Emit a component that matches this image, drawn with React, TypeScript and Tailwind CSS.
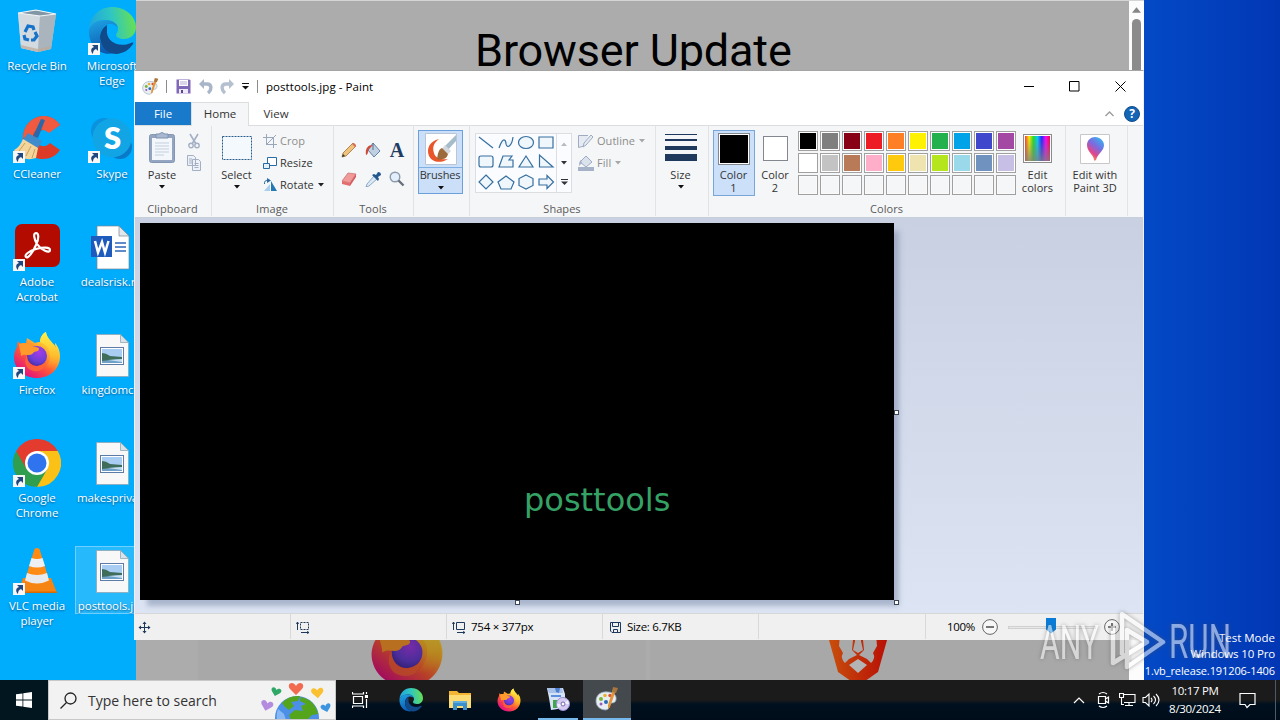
import React from 'react';
import type { ReactNode } from 'react';

type IconProps = { className?: string };

const UI = "font-['Open_Sans','Noto_Sans',sans-serif]";

const PALETTE = [
  '#000000', '#7f7f7f', '#880015', '#ed1c24', '#ff7f27', '#fff200', '#22b14c', '#00a2e8', '#3f48cc', '#a349a4',
  '#ffffff', '#c3c3c3', '#b97a57', '#ffaec9', '#ffc90e', '#efe4b0', '#b5e61d', '#99d9ea', '#7092be', '#c8bfe7',
];

/* ── App logos ─────────────────────────────────────────────────── */

function FirefoxIcon({ className }: IconProps) {
  return (
    <svg viewBox="0 0 48 48" className={className}>
      <defs>
        <linearGradient id="fxBody" x1="0.8" y1="0.1" x2="0.2" y2="0.9">
          <stop offset="0" stopColor="#fff44f" />
          <stop offset="0.3" stopColor="#ffb32c" />
          <stop offset="0.6" stopColor="#ff5a36" />
          <stop offset="1" stopColor="#e3127f" />
        </linearGradient>
        <radialGradient id="fxGlobe" cx="0.6" cy="0.3" r="0.8">
          <stop offset="0" stopColor="#a63be8" />
          <stop offset="0.6" stopColor="#6a3fd6" />
          <stop offset="1" stopColor="#3c2a9a" />
        </radialGradient>
        <linearGradient id="fxTail" x1="0.5" y1="0" x2="0.5" y2="1">
          <stop offset="0" stopColor="#fff14a" />
          <stop offset="0.6" stopColor="#ffc02e" />
          <stop offset="1" stopColor="#ff8a2a" stopOpacity="0" />
        </linearGradient>
      </defs>
      <path d="M5 10c-1 3-1 5-1 6C2 19 1 23 1 26c0 12 10 21 23 21s23-9 23-22c0-6-3-11-5-13 0 2 1 4 1 5-2-4-5-6-7-9-2-3-3-5-3-7-4 2-6 6-6 10-1 0-3 0-5 1L14 7l-1 5c-2 0-4 0-5 1-2-1-2-2-3-3z" fill="url(#fxBody)" />
      <path d="M33 1c-4 2-6 6-6 10 8 3 11 9 10 16-1 6-5 10-9 12 10 0 17-6 18-15 0-5-2-9-4-12 0 2 1 4 1 5-2-4-5-6-7-9-2-3-3-5-3-7z" fill="url(#fxTail)" />
      <circle cx="24" cy="25" r="10" fill="url(#fxGlobe)" />
      <path d="M6 13c5-2 11-1 14 3 2 0 6 0 6 2 0 2-2 2-5 3-1 2-3 3-5 3-3 0-5-1-8 1 0-4-2-7-2-12z" fill="#ff9a2b" />
      <path d="M14 24c0 8 5 12 11 11 5-1 8-4 8-4-1 7-6 10-12 9-8-1-11-9-7-16z" fill="#ff6a33" opacity="0.75" />
    </svg>
  );
}

function EdgeIcon({ className }: IconProps) {
  return (
    <svg viewBox="0 0 48 48" className={className}>
      <defs>
        <linearGradient id="edTop" x1="0" y1="0.5" x2="1" y2="0.4">
          <stop offset="0" stopColor="#1fa5e0" />
          <stop offset="0.5" stopColor="#2fc7c0" />
          <stop offset="1" stopColor="#6ae04e" />
        </linearGradient>
        <linearGradient id="edSide" x1="0.3" y1="0" x2="0.6" y2="1">
          <stop offset="0" stopColor="#1e9fe0" />
          <stop offset="1" stopColor="#0a55ad" />
        </linearGradient>
      </defs>
      <path d="M1 22C2 9 12 0 24 0c14 0 24 10 24 20 0 8-6 12-12 12-5 0-8-2-8-4 0-2 2-3 2-6 0-5-5-9-12-9C10 13 4 16 1 22z" fill="url(#edTop)" />
      <path d="M1 23c2-7 9-10 16-10 8 0 13 4 13 9 0-3-4-5-8-5-6 0-10 6-10 13 0 8 6 14 14 16-14 4-26-8-25-23z" fill="url(#edSide)" />
      <path d="M19 18c-5 3-7 8-7 13 1 10 8 16 17 16 7-1 12-4 16-10 1-1 0-2-2-1-12 5-23-1-24-10 0-3 0-6 0-8z" fill="#114a8b" />
    </svg>
  );
}

function ChromeIcon() {
  return (
    <svg viewBox="0 0 48 48" className="size-12">
      <path d="M24 24 3.200 12A24 24 0 0 1 44.800 12z" fill="#e33b2e" />
      <path d="M24 24V12h20.800A24 24 0 0 1 24 48l-2 0z" fill="#fbc116" />
      <path d="M24 24 34.400 30 24 48A24 24 0 0 1 3.200 12z" fill="#2f9e4f" />
      <path d="M3.200 12 13.600 30 24 12z" fill="#e33b2e" />
      <circle cx="24" cy="24" r="12" fill="#fff" />
      <circle cx="24" cy="24" r="9.500" fill="#2f74ee" />
    </svg>
  );
}

function RecycleBinIcon() {
  return (
    <svg viewBox="0 0 48 48" className="size-12">
      <path d="M5 6 23 3l20 4-5 35-13 3-17-4z" fill="#c4cbd1" opacity="0.9" />
      <path d="M5 6l22 3-2 36-17-4z" fill="#d3dbe1" />
      <path d="M27 9l16-2-5 35-13 3z" fill="#aab4bc" />
      <path d="M5 6 23 3l20 4-16 2z" fill="#8297a5" />
      <path d="M5 6 23 3l20 4-16 2z" fill="none" stroke="#f3f6f8" strokeWidth="1.2" />
      <path d="m8 38 17 4 13-3-1 3-12 3-17-4z" fill="#bfa894" opacity="0.7" />
      <g fill="none" stroke="#1673c9" strokeWidth="3.200">
        <path d="M12 25l3-6 5 1 1 3" />
        <path d="M22 25l2 4-3 4h-3" />
        <path d="M16 33l-4-1-1-4" />
      </g>
    </svg>
  );
}

function CCleanerIcon() {
  return (
    <svg viewBox="0 0 48 48" className="size-12">
      <path d="M47 10C42 3 36 1 30 1 18 2 10 11 10 23c0 13 9 21 20 21 7 0 13-3 17-9l-10-7c-4 5-12 4-14-3-1-8 7-13 13-8z" fill="#dc3b28" />
      <path d="M30 1C18 2 10 11 10 23l10-2c1-7 9-9 16-3L47 10C42 3 36 1 30 1z" fill="#f05a40" />
      <path d="m28 4 4 1-7 18-5-2z" fill="#2c68a8" />
      <path d="m15 18 14 8-4 7-15-8z" fill="#3f8ccc" />
      <path d="m10 24 15 9-2 10c-9 3-17 0-22-8 4-2 7-6 9-11z" fill="#f4d59c" />
      <path d="m12 28-6 8m12-5-5 10m9-7-3 9" stroke="#c89f5c" strokeWidth="1" />
    </svg>
  );
}

function SkypeIcon() {
  return (
    <svg viewBox="0 0 48 48" className="size-12">
      <circle cx="16" cy="16" r="13" fill="#0a92df" />
      <circle cx="32" cy="32" r="12" fill="#087ac8" />
      <circle cx="24" cy="23" r="19.500" fill="#12a5e6" />
      <text x="24.500" y="34" textAnchor="middle" fontFamily="Lato, Open Sans, sans-serif" fontWeight="800" fontSize="31" fill="#fff">S</text>
    </svg>
  );
}

function AcrobatIcon() {
  return (
    <svg viewBox="0 0 48 48" className="size-12">
      <rect x="2" y="1" width="45" height="43" rx="7" fill="#b30b00" />
      <path d="M13 34c-2-2 3-6 10-8 7-2 14-2 14 1 0 4-9 0-13-6-3-5-4-11-1-11s3 6 0 12c-3 7-8 14-10 12z" fill="none" stroke="#fff" strokeWidth="2.200" />
    </svg>
  );
}

function VlcIcon() {
  return (
    <svg viewBox="0 0 48 48" className="size-12">
      <path d="M10 31h28l6 15H5z" fill="#f58413" />
      <path d="M5 44.500h39V46H5z" fill="#d86a05" />
      <path d="M21.500 2q2.500-2 5 0l8 26 1 6q-11.500 6-23 0l1-6z" fill="#ff8a14" />
      <path d="m18.500 11-2.500 8q8 3 16 0l-2.500-8q-5.500 2-11 0z" fill="#eef0f2" />
      <path d="m14 26-2 7.500q12 6 24 0L34 26q-10 4-20 0z" fill="#e7e9ec" />
    </svg>
  );
}

function WordDocIcon() {
  return (
    <svg viewBox="0 0 48 48" className="size-12">
      <path d="M9 3h22l10 10v33H9z" fill="#fff" stroke="#7b8792" strokeWidth="0.7" />
      <path d="M31 3v10h10z" fill="#dfe6ec" stroke="#7b8792" strokeWidth="0.7" />
      <path d="M27 20h11M27 24h11M27 28h11" stroke="#2b66b8" strokeWidth="1.400" />
      <rect x="3" y="13" width="21" height="21" fill="#1f5bbd" />
      <path d="M7 18l3 11.500L14 19l3 10.500L20.500 18" fill="none" stroke="#fff" strokeWidth="2.500" />
    </svg>
  );
}

function PictureFileIcon() {
  return (
    <svg viewBox="0 0 48 48" className="size-12">
      <path d="M8.500 3.500h24l8 8v34h-32z" fill="#f8f8f8" stroke="#8fa7b5" strokeWidth="0.8" />
      <path d="M32.500 3.500v8h8z" fill="#d9e2e8" stroke="#8fa7b5" strokeWidth="0.8" />
      <rect x="12.500" y="16.500" width="23" height="17" fill="#fff" stroke="#5d7ca8" />
      <path d="M14 18h20v8H14z" fill="#a9cdf2" />
      <path d="M14 26h20v6H14z" fill="#6fa1c8" />
      <path d="M14 22q4 0 8 3l12 1v2l-12 1-8 1z" fill="#3f6d5c" />
      <path d="M20 29l14-1v3z" fill="#c6def0" />
    </svg>
  );
}

function PaletteIcon({ className }: IconProps) {
  return (
    <svg viewBox="0 0 24 24" className={className}>
      <path d="M1 14C1 8 6 4 13 5c6 0 9 4 8 8-1 4-4 2-6 4-1 2 0 5-4 6C6 23 1 20 1 14z" fill="#e9eef3" stroke="#8fa3b5" strokeWidth="0.8" />
      <circle cx="6" cy="12" r="2" fill="#7bb33b" />
      <circle cx="10" cy="8.500" r="1.800" fill="#e9b131" />
      <circle cx="15" cy="8.500" r="1.700" fill="#d8533a" />
      <circle cx="11" cy="15" r="2" fill="#2a6bb8" />
      <circle cx="6" cy="17" r="1.500" fill="#9a5bc0" />
      <path d="m21 3-6 17-2 2 0-4 5-16z" fill="#e0953a" />
      <path d="m18 0 5 1-2 5-4-1z" fill="#a8763c" />
    </svg>
  );
}

/* ── Desktop ───────────────────────────────────────────────────── */

function ShortcutArrow() {
  return (
    <svg viewBox="0 0 12 12" className="absolute bottom-0 left-0 size-3">
      <path d="M0 0h12v12H0z" fill="#f7f7f7" />
      <path d="M4 2h6v6L8 6C6 7 5 8 5 11 2 8 3 5 6 4z" fill="#20487f" />
    </svg>
  );
}

type DesktopItemProps = { label: ReactNode; icon: ReactNode; shortcut?: boolean; selected?: boolean };

function DesktopItem({ label, icon, shortcut, selected }: DesktopItemProps) {
  return (
    <div
      className={`flex flex-col items-center w-[74px] h-[108px] ${
        selected ? 'relative before:absolute before:inset-x-0 before:-top-px before:h-[68px] before:border before:border-[#6fd0ff] before:bg-white/15' : ''
      }`}
    >
      <div className="relative size-12">
        {icon}
        {shortcut && <ShortcutArrow />}
      </div>
      <div className="relative mt-[3px] text-[11.5px] leading-[15px] text-white text-center whitespace-nowrap tracking-[-0.050px] [text-shadow:0_1px_2px_rgba(0,40,90,0.65)]">
        {label}
      </div>
    </div>
  );
}

function DesktopIcons() {
  return (
    <div className="grid grid-flow-col grid-rows-6 gap-x-px w-max pt-[7px]">
      <DesktopItem label="Recycle Bin" icon={<RecycleBinIcon />} />
      <DesktopItem label="CCleaner" icon={<CCleanerIcon />} shortcut />
      <DesktopItem label={<>Adobe<br />Acrobat</>} icon={<AcrobatIcon />} shortcut />
      <DesktopItem label="Firefox" icon={<FirefoxIcon className="size-12" />} shortcut />
      <DesktopItem label={<>Google<br />Chrome</>} icon={<ChromeIcon />} shortcut />
      <DesktopItem label={<>VLC media<br />player</>} icon={<VlcIcon />} shortcut />
      <DesktopItem label={<>Microsoft<br />Edge</>} icon={<EdgeIcon className="size-12" />} shortcut />
      <DesktopItem label="Skype" icon={<SkypeIcon />} shortcut />
      <DesktopItem label="dealsrisk.rtf" icon={<WordDocIcon />} />
      <DesktopItem label="kingdomc..." icon={<PictureFileIcon />} />
      <DesktopItem label="makespriva..." icon={<PictureFileIcon />} />
      <DesktopItem label="posttools.jpg" icon={<PictureFileIcon />} selected />
    </div>
  );
}

/* ── Browser window behind Paint ───────────────────────────────── */

function BraveIcon() {
  return (
    <svg viewBox="0 0 60 72" className="w-[60px] h-[72px]">
      <defs>
        <linearGradient id="brave" x1="0" x2="1">
          <stop offset="0" stopColor="#c8500c" />
          <stop offset="1" stopColor="#b80e06" />
        </linearGradient>
      </defs>
      <path d="M8 4h44l8 12-1 10-9 32-20 14-20-14L1 26 0 16z" fill="url(#brave)" />
      <path d="M12 20h12l1 6-1 10 5 5-8 4-4 4q-5-5-2-10l-4-7z" fill="#a9a9a9" />
      <path d="M48 20H36l-1 6 1 10-5 5 8 4 4 4q5-5 2-10l4-7z" fill="#a9a9a9" />
      <path d="M27 20h6v7l2 9-5 3-5-3 2-9z" fill="#a9a9a9" />
      <path d="m30 45 9 6-9 8-9-8z" fill="#b4b4b4" />
    </svg>
  );
}

function BrowserWindow() {
  return (
    <div className="absolute left-[136px] top-0 w-[1008px] h-[686px] flex bg-[#acacac] border-t border-[#d5d5d5]">
      <div className="flex-1 flex flex-col justify-between overflow-hidden">
        <h1 className="pl-[339px] pt-[20px] font-[Roboto,sans-serif] text-[45px] leading-[60px] tracking-[-0.150px] text-black whitespace-nowrap">
          Browser Update
        </h1>
        <div className="h-[72px] ml-[62px] flex gap-1">
          <div className="w-[448px] bg-[#a8a8a8] pl-[172px]">
            <FirefoxIcon className="size-[74px] brightness-[0.72]" />
          </div>
          <div className="flex-1 bg-[#a8a8a8] pl-[178px]"><BraveIcon /></div>
        </div>
      </div>
      <div className="w-[15px] bg-[#fcfcfc] flex flex-col items-center pt-[6px]">
        <svg viewBox="0 0 10 6" className="w-[9px] h-[6px]"><path d="M0 6 5 0l5 6z" fill="#858585" /></svg>
        <div className="mt-[6px] w-[9px] h-[300px] rounded-full bg-[#8b8b8b]" />
      </div>
    </div>
  );
}

/* ── Paint ─────────────────────────────────────────────────────── */

function Caret({ className = 'text-[#222]' }: IconProps) {
  return <svg viewBox="0 0 6 4" className={`w-[6px] h-[4px] shrink-0 ${className}`}><path d="M0 0h6L3 3.500z" fill="currentColor" /></svg>;
}

function TitleBar() {
  return (
    <div className="h-[31px] shrink-0 flex items-center pl-[7px] text-xs text-black">
      <PaletteIcon className="size-[17px]" />
      <div className="ml-[7px] w-px h-[13px] bg-[#8c8c8c]" />
      <svg viewBox="0 0 15 15" className="ml-[9px] size-[15px]">
        <path d="M.5.500h13l1 1v13H.500z" fill="#8069b8" />
        <path d="M3 1h9v6H3z" fill="#fff" />
        <path d="M4 3h7M4 5h7" stroke="#b7a6d8" />
        <path d="M3 10h9v4.500H3z" fill="#efeaf8" />
        <path d="M5 11h2v3H5z" fill="#5a4590" />
      </svg>
      <svg viewBox="0 0 14 15" className="ml-[8px] w-[14px] h-[15px]">
        <path d="M3 5h5c5 0 5 6 1 9" fill="none" stroke="#a9b5c9" strokeWidth="3.400" />
        <path d="M0 5 5 0v10z" fill="#a9b5c9" />
      </svg>
      <svg viewBox="0 0 14 15" className="ml-[7px] w-[14px] h-[15px]">
        <path d="M11 5H6c-5 0-5 6-1 9" fill="none" stroke="#b4bfd0" strokeWidth="3.400" />
        <path d="M14 5 9 0v10z" fill="#b4bfd0" />
      </svg>
      <svg viewBox="0 0 7 7" className="ml-[8px] size-[7px]"><path d="M0 .5h7" stroke="#111" /><path d="M0 3h7L3.500 6.500z" fill="#111" /></svg>
      <div className="ml-[8px] w-px h-[13px] bg-[#8c8c8c]" />
      <span className="ml-[8px] text-[11.500px] tracking-[0.050px]">posttools.jpg - Paint</span>
      <div className="ml-auto flex items-center">
        <svg viewBox="0 0 11 11" className="size-[11px] mr-[34px]"><path d="M0 5.500h10" stroke="#000" /></svg>
        <svg viewBox="0 0 11 11" className="size-[11px] mr-[35px]"><path d="M.5.500h9.500v9.500H.500z" fill="none" stroke="#000" /></svg>
        <svg viewBox="0 0 11 11" className="size-[11px] mr-[17px]"><path d="m.5.500 10 10m0-10-10 10" stroke="#000" /></svg>
      </div>
    </div>
  );
}

function Tabs() {
  return (
    <div className="h-6 shrink-0 flex text-[11.500px] leading-6 text-[#333] border-b border-[#dcdddf]">
      <div className="w-14 bg-[#1979ca] text-white text-center">File</div>
      <div className="w-[58px] h-6 bg-[#f5f6f7] border-x border-t border-[#dcdddf] text-center leading-[22px]">Home</div>
      <div className="w-[54px] text-center">View</div>
      <div className="ml-auto flex items-center pr-[3px]">
        <svg viewBox="0 0 9 6" className="w-[9px] h-[6px] mr-[10px]"><path d="m.5 5 4-4 4 4" fill="none" stroke="#9a9a9a" strokeWidth="1.300" /></svg>
        <div className="size-4 rounded-full bg-[#1565b5] border border-[#0d4d90] text-white text-[12px] font-bold leading-[14px] text-center">?</div>
      </div>
    </div>
  );
}

function Group({ width, label = '', children }: { width: string; label?: string; children: ReactNode }) {
  return (
    <div className={`shrink-0 flex flex-col ${width} border-r border-[#e1e3e5]`}>
      <div className="h-[74px] flex">{children}</div>
      <div className="h-[16px] -ml-px text-center leading-[18px] text-[#5a5a5a]">{label}</div>
    </div>
  );
}

type BigButtonProps = { width: string; icon: ReactNode; label: ReactNode; caret?: boolean };

function BigButton({ width, icon, label, caret }: BigButtonProps) {
  return (
    <div className={`shrink-0 flex flex-col items-center pt-[6px] ${width}`}>
      <div className="h-9 w-full flex flex-col items-center">{icon}</div>
      <div className="text-center leading-[13px] text-[#333] whitespace-nowrap">{label}</div>
      {caret && <Caret className="mt-[4px] text-[#111]" />}
    </div>
  );
}

function SmallRow({ icon, label, caret, disabled }: { icon: ReactNode; label: string; caret?: boolean; disabled?: boolean }) {
  return (
    <div className={`h-[22px] flex items-center ${disabled ? 'text-[#8d8d8d]' : 'text-[#333]'}`}>
      {icon}
      <span className="ml-[3px]">{label}</span>
      {caret && <Caret className={`ml-[4px] ${disabled ? 'text-[#a8a8a8]' : 'text-[#222]'}`} />}
    </div>
  );
}

function ClipboardGroup() {
  return (
    <Group width="w-[77px]" label="Clipboard">
      <div className="w-[9px]" />
      <BigButton
        width="w-9"
        label="Paste"
        caret
        icon={
          <svg viewBox="0 0 26 32" className="w-[26px] h-8">
            <rect x="0.500" y="2.500" width="25" height="28" rx="2" fill="#93a5c1" stroke="#8397b5" />
            <path d="M3 6h20v22H3z" fill="#f3f6fa" />
            <path d="M6 11h14M6 14h14M6 17h14M6 20h14M6 23h9" stroke="#c4cfdf" />
            <path d="M7 2h3q3-3 6 0h3v4H7z" fill="#a8b8d0" stroke="#7e92b0" />
          </svg>
        }
      />
      <div className="w-[27px] pt-[4px] flex flex-col items-center">
        <svg viewBox="0 0 12 16" className="w-3 h-[22px]">
          <path d="M2 1l6 10M10 1 4 11" stroke="#a3afc4" strokeWidth="1.600" />
          <circle cx="3" cy="12.500" r="2.200" fill="none" stroke="#a3afc4" strokeWidth="1.400" />
          <circle cx="9" cy="12.500" r="2.200" fill="none" stroke="#a3afc4" strokeWidth="1.400" />
        </svg>
        <svg viewBox="0 0 16 16" className="w-4 h-[22px]" fill="#eef2f8" stroke="#a3afc4">
          <path d="M1.500.500h6l2 2v8h-8zM6.500 4.500h6l2 2v9h-8z" />
          <path d="M3 4h3M3 6h3M3 8h3M8.500 8.500h4M8.500 10.500h4M8.500 12.500h4" />
        </svg>
      </div>
    </Group>
  );
}

function ImageGroup() {
  return (
    <Group width="w-[122px]" label="Image">
      <div className="w-[3px]" />
      <BigButton
        width="w-[43px]"
        label="Select"
        caret
        icon={
          <svg viewBox="0 0 30 32" className="w-[30px] h-8">
            <rect x="0.500" y="4.500" width="29" height="23" fill="#f4f9fd" stroke="#2a5c8d" strokeDasharray="2 1" />
          </svg>
        }
      />
      <div className="pl-[5px] pt-[4px]">
        <SmallRow
          label="Crop"
          disabled
          icon={<svg viewBox="0 0 14 14" className="size-[14px]" fill="none" stroke="#9aa7bb"><path d="M3.500 0v10.500H14M0 3.500h10.500V14M3 11 13 1" /></svg>}
        />
        <SmallRow
          label="Resize"
          icon={<svg viewBox="0 0 14 14" className="size-[14px]" fill="#fff" stroke="#2a6aa3"><path d="M4.500 1.500h9v8h-9z" /><path d="M.5 7.500h6v5h-6z" fill="#e4f0fa" /></svg>}
        />
        <SmallRow
          label="Rotate"
          caret
          icon={
            <svg viewBox="0 0 14 14" className="size-[14px]">
              <path d="M8 3v10h6z" fill="#2479b5" />
              <path d="M7 6v7H1z" fill="#a9cdec" />
              <path d="M1.500 6Q1 2 5 2.500" fill="none" stroke="#2a6aa3" />
              <path d="m4 0 4 2.500L4 5z" fill="#2a6aa3" />
            </svg>
          }
        />
      </div>
    </Group>
  );
}

function ToolsGroup() {
  return (
    <Group width="w-[80px]" label="Tools">
      <div className="ml-[3px] pt-[9px] grid grid-cols-[24px_24px_24px] grid-rows-[29px_29px] place-items-center h-[67px]">
        <svg viewBox="0 0 16 16" className="size-4">
          <path d="M1 15l1-4L12 1l3 3L5 14z" fill="#f0c27c" stroke="#9b7440" strokeWidth="0.800" />
          <path d="m11 2 2-1 2 2-1 2z" fill="#d76a5c" />
          <path d="m1 15 1-3 2 2z" fill="#333" />
        </svg>
        <svg viewBox="0 0 16 16" className="size-4">
          <path d="m8 1 7 8-6 6-6-7z" fill="#bfd0e2" stroke="#6583a5" />
          <path d="M8 1v7" stroke="#52708f" />
          <path d="M8 3C3 3 0 6 1 13c2 0 2-4 3-6z" fill="#cf4d38" />
        </svg>
        <span className="font-['Liberation_Serif',serif] font-bold text-[20px] leading-5 text-[#1f3d63]">A</span>
        <svg viewBox="0 0 16 16" className="size-4">
          <path d="m7 2 8 1-6 9-8-2z" fill="#f09a9a" stroke="#c86868" strokeWidth="0.700" />
          <path d="m1 10 8 2v3l-8-2z" fill="#e26e70" />
          <path d="m9 12 6-9v3l-6 9z" fill="#d45a60" />
        </svg>
        <svg viewBox="0 0 16 16" className="size-4">
          <path d="m9 5 3 3-8 7-3 1 1-3z" fill="#d9e9f6" stroke="#7898b8" strokeWidth="0.800" />
          <path d="m7 4 2-1 2 1 2-3q3 0 3 3l-3 2 1 2-1 2z" fill="#24578f" />
        </svg>
        <svg viewBox="0 0 16 16" className="size-4">
          <circle cx="6" cy="6" r="4.800" fill="#e2eefa" stroke="#8c9bac" strokeWidth="1.400" />
          <path d="m9.500 9.500 5 5" stroke="#66707c" strokeWidth="2.400" />
        </svg>
      </div>
    </Group>
  );
}

function BrushesGroup() {
  return (
    <Group width="w-[56px]">
      <div className="ml-[4px] mt-[4px] w-[45px] h-[64px] border border-[#6aa1dc] bg-[#cbe0f8] flex flex-col items-center text-[#333]">
        <div className="h-[37px] w-full pt-[2px] border-b border-[#7fb0e4] flex justify-center">
          <svg viewBox="0 0 32 32" className="size-8">
            <path d="M.5.500h31v31H.500z" fill="#fff" stroke="#b9c6d6" />
            <path d="M14 6C5 8 1 15 4 23c3 6 11 8 19 3-7 1-13-1-14-6-2-6 0-10 5-14z" fill="#e8562a" />
            <path d="M31 2v6L22 18l-4-3z" fill="#a7bccb" />
            <path d="m20 12 6 6-3 3-6-5z" fill="#d2d8de" />
            <path d="m17 15 6 6c-1 5-6 6-11 5 1-5 1-9 5-11z" fill="#9d6a3c" />
          </svg>
        </div>
        <span className="-ml-px leading-[14px] tracking-[-0.150px]">Brushes</span>
        <Caret className="mt-[4px] text-[#111]" />
      </div>
    </Group>
  );
}

const SHAPES = [
  'M2 3l14 11', 'M2 14C7 0 9 8 9 10c1 5 6 2 7-7', 'M1.500 8.500a7.500 6 0 1 0 15 0a7.500 6 0 1 0-15 0', 'M2 3h14v11H2z',
  'M4 3h10q2 0 2 2v7q0 2-2 2H4q-2 0-2-2V5q0-2 2-2z', 'M6 3h9l-3 4h4v7H2z', 'M9 3l7 11H2z', 'M2.500 2v12H16z',
  'M9 2l7 7-7 7-7-7z', 'M9 3l8 6-3 7H4L1 9z', 'M9 2l7 3.500v7L9 16l-7-3.500v-7z', 'M2 6h8V2.500L16.500 9 10 15.500V12H2z',
];

function ShapesGroup() {
  return (
    <Group width="w-[186px]" label="Shapes">
      <div className="ml-[5px] mt-[7px] w-[97px] h-[60px] border border-[#dcdee2] bg-[#fafcff] flex">
        <div className="w-[81px] grid grid-cols-4 grid-rows-3 border-r border-[#dcdee2]">
          {SHAPES.map((d) => (
            <svg key={d} viewBox="0 0 18 18" className="size-[18px] ml-px"><path d={d} fill={d === 'M2 3l14 11' ? 'none' : '#eff7fd'} stroke="#376f9f" strokeWidth="1.200" /></svg>
          ))}
        </div>
        <div className="flex-1 flex flex-col items-center justify-between pt-[8px] pb-[7px]">
          <Caret className="rotate-180 text-[#bbb]" />
          <Caret className="text-[#333]" />
          <svg viewBox="0 0 7 6" className="w-[7px] h-[6px]"><path d="M0 .5h7" stroke="#333" /><path d="M0 2.500h7L3.500 6z" fill="#333" /></svg>
        </div>
      </div>
      <div className="pl-[6px] pt-[4px]">
        <SmallRow
          label="Outline"
          caret
          disabled
          icon={<svg viewBox="0 0 16 16" className="size-4" fill="#e6ebf3" stroke="#9eabc0"><path d="M10 2.500H.500v12L6 13" /><path d="m5 14 1-4 7-8 2 2-7 8z" /></svg>}
        />
        <SmallRow
          label="Fill"
          caret
          disabled
          icon={<svg viewBox="0 0 16 16" className="size-4"><path d="m8 1 6 6-6 5-6-5z" fill="#dbe2ed" stroke="#9eabc0" /><path d="M3 5q-2 1-2 6l3-3zM0 12h16v4H0z" fill="#a5b2c8" /></svg>}
        />
      </div>
    </Group>
  );
}

function Swatch({ className }: { className: string }) {
  return <div className={`border border-[#828790] ring-1 ring-inset ring-white ${className}`} />;
}

function ColorsGroup() {
  return (
    <Group width="w-[357px]" label="Colors">
      <div className="ml-[4px] mt-[4px] w-[42px] h-[66px] bg-[#cce1f9] border border-[#78a6d8] flex flex-col items-center pt-[2px] leading-[13px] text-[#333]">
        <div className="size-8 border border-[#828790] bg-white p-px"><div className="size-full bg-black" /></div>
        <span className="-ml-px mt-[3px] text-center">Color<br />1</span>
      </div>
      <BigButton width="w-[40px]" icon={<Swatch className="mt-[4px] size-[25px] bg-white" />} label={<>Color<br />2</>} />
      <div className="pl-[3px] pt-[5px] grid grid-cols-10 gap-[2px] w-max h-max">
        {PALETTE.map((c) => (
          <div key={c} className="size-5 border border-[#a0a0a0] bg-white p-px">
            <div className="size-full" style={{ backgroundColor: c }} />
          </div>
        ))}
        {Array.from({ length: 10 }, (_, i) => (
          <div key={i} className="size-5 border border-[#a0a0a0] bg-[#f5f6f7] ring-1 ring-inset ring-[#fafafa]" />
        ))}
      </div>
      <BigButton
        width="w-[43px]"
        label={<>Edit<br />colors</>}
        icon={
          <div className="mt-[2px] size-[29px] border border-[#8c8c8c] bg-white p-[1px]">
            <div className="size-full bg-[linear-gradient(to_top,#808080cc,#80808000),linear-gradient(to_right,#f33,#fe0,#2d2,#0cf,#22f,#f0f,#f03)]" />
          </div>
        }
      />
    </Group>
  );
}

function Ribbon() {
  return (
    <div className="h-[91px] shrink-0 bg-[#f5f6f7] flex pb-px text-[11px] tracking-[0.050px]">
      <ClipboardGroup />
      <ImageGroup />
      <ToolsGroup />
      <BrushesGroup />
      <ShapesGroup />
      <Group width="w-[53px]">
        <BigButton
          width="w-[49px]"
          label="Size"
          caret
          icon={
            <div className="w-8 pt-[2px] flex flex-col">
              <div className="h-px bg-[#1e395b]" />
              <div className="mt-[4px] h-[2px] bg-[#1e395b]" />
              <div className="mt-[5px] h-1 bg-[#1e395b]" />
              <div className="mt-[4px] h-[7px] bg-[#1e395b]" />
            </div>
          }
        />
      </Group>
      <ColorsGroup />
      <Group width="w-[62px]">
        <BigButton
          width="w-[58px]"
          label={<>Edit with<br />Paint 3D</>}
          icon={
            <svg viewBox="0 0 30 30" className="mt-[2px] size-[30px]">
              <defs>
                <linearGradient id="paint3d" x1="0.800" y1="0" x2="0.200" y2="1">
                  <stop offset="0" stopColor="#35b5f2" />
                  <stop offset="0.400" stopColor="#7a6be0" />
                  <stop offset="0.700" stopColor="#e2468b" />
                  <stop offset="1" stopColor="#ffb03a" />
                </linearGradient>
              </defs>
              <path d="M.5.500h29v29H.500z" fill="#fff" stroke="#c8c8c8" />
              <path d="M15 3c5 0 9 4 9 8 0 6-6 8-8 15-1 1-2 1-2 0 0-5-7-8-7-15 0-5 4-8 8-8z" fill="url(#paint3d)" />
            </svg>
          }
        />
      </Group>
    </div>
  );
}

function Handle({ className }: { className: string }) {
  return <div className={`absolute size-[5px] bg-white border border-[#3c4656] ${className}`} />;
}

function CanvasArea() {
  return (
    <div className="h-[396px] shrink-0 bg-linear-to-b from-[#c8d0e2] to-[#dde5f4] border-t border-[#c9cedb] pt-[5px] pl-[5px]">
      <div className="relative w-[754px] h-[377px] bg-black shadow-[6px_7px_5px_-1px_rgba(120,135,165,0.500)]">
        <span className="block pt-[256px] pl-[384px] font-['DejaVu_Sans',sans-serif] text-[32px] leading-[42px] text-[#35a265]">
          posttools
        </span>
        <Handle className="left-[754px] top-[187px]" />
        <Handle className="left-[754px] top-[377px]" />
        <Handle className="left-[375px] top-[377px]" />
      </div>
    </div>
  );
}

function StatusBar() {
  return (
    <div className="h-[27px] shrink-0 flex bg-[#f0f0f0] border-t border-[#d7d7d7] text-[11.500px] text-black *:flex *:items-center *:border-r *:border-[#d9d9d9]">
      <div className="w-[156px] pl-[3px]">
        <svg viewBox="0 0 13 13" className="size-[13px]">
          <path d="M6.500 1v11M1 6.500h11" stroke="#1e395b" />
          <path d="m4.500 3 2-2.500 2 2.500zM4.500 10l2 2.500 2-2.500zM3 4.500l-2.500 2 2.500 2zM10 4.500l2.500 2-2.500 2z" fill="#1e395b" />
        </svg>
      </div>
      <div className="w-[156px] pl-[5px]"><DimensionsIcon dash="2 1" /></div>
      <div className="w-[156px] pl-[5px] gap-[5px]"><DimensionsIcon /><span className="tracking-[-0.250px]">754 × 377px</span></div>
      <div className="w-[156px] pl-[7px] gap-[6px]">
        <svg viewBox="0 0 11 11" className="size-[11px]" fill="none" stroke="#1e395b">
          <path d="M.5.500h10v10H2L.500 9z" /><path d="M2.500.500v4h6v-4M3.500 10.500v-3h4v3" />
        </svg>
        <span className="tracking-[-0.300px]">Size: 6.7KB</span>
      </div>
      <div className="w-[167px]" />
      <div className="flex-1 border-none! pl-[21px]">
        <span className="w-[28px] text-right tracking-[-0.300px]">100%</span>
        <ZoomButton d="M4 8h8" className="ml-[7px]" />
        <div className="relative ml-[10px] w-[88px] h-[3px] border border-[#d0d0d0] bg-[#e7e7e7]">
          <div className="absolute left-[37px] -top-[9px] w-[10px] h-[16px] bg-[#0a7cd8] [clip-path:polygon(0_0,100%_0,100%_75%,50%_100%,0_75%)]" />
        </div>
        <ZoomButton d="M4 8h8M8 4v8" className="ml-[8px]" />
      </div>
    </div>
  );
}

function ZoomButton({ d, className }: { d: string; className: string }) {
  return (
    <svg viewBox="0 0 16 16" className={`size-4 ${className}`}>
      <circle cx="8" cy="8" r="7.400" fill="#f7f7f7" stroke="#666" />
      <path d={d} stroke="#555" strokeWidth="1.600" />
    </svg>
  );
}

function DimensionsIcon({ dash }: { dash?: string }) {
  return (
    <svg viewBox="0 0 14 13" className="w-[14px] h-[13px]" fill="none" stroke="#1e395b">
      <path d="M4.500 1.500h8v7h-8z" strokeDasharray={dash} />
      <path d="M1.500 1v8M.500 3l1-2 1 2M5 11.500h8M11 10.500l2 1-2 1" />
    </svg>
  );
}

function PaintWindow() {
  return (
    <div className="absolute left-[134px] top-[70px] w-[1010px] h-[570px] flex flex-col bg-white border border-[#f0f0f0] border-t-[#a4a4a4] overflow-hidden">
      <TitleBar />
      <Tabs />
      <Ribbon />
      <CanvasArea />
      <StatusBar />
    </div>
  );
}

/* ── Watermark and build info ──────────────────────────────────── */

function Watermark() {
  return (
    <svg viewBox="0 0 200 62" className="absolute left-[1036px] top-[609px] w-[200px] h-[62px] opacity-55 drop-shadow-[0_0_2px_rgba(80,80,80,0.900)]">
      <g fontFamily="Roboto, sans-serif" fontWeight="400" fontSize="49" fill="#fff">
        <text x="4" y="50" textLength="59" lengthAdjust="spacingAndGlyphs">ANY</text>
        <text x="133" y="49" textLength="62" lengthAdjust="spacingAndGlyphs">RUN</text>
      </g>
      <path d="M77 17v37l34-21-20-12v37l36-25L86 5v41" fill="none" stroke="#fff" strokeWidth="4.500" strokeLinejoin="round" />
    </svg>
  );
}

/* ── Taskbar ───────────────────────────────────────────────────── */

function SearchArt() {
  const heart = 'M0 3C-3-3-10 1-6 6l6 6 6-6c4-5-3-9-6-3z';
  return (
    <svg viewBox="0 0 76 40" className="w-[76px] h-10">
      <circle cx="37" cy="38" r="22" fill="#4b8fe6" />
      <path d="M22 23q7-8 18-7l-2 5-7 1 3 4-5 4-4-3zM41 17q14 3 17 17l-6 1-5 5H31l-2-5 6-5 8 1-2-5 5-2-6-3z" fill="#55a51c" />
      <path d="M18 29l6 5 2 6h-9q-1-6 1-11z" fill="#86b9f5" />
      <path d={heart} transform="translate(36 3)" fill="#f26a4f" />
      <path d={heart} transform="translate(17 8) rotate(15) scale(.7)" fill="#2fa866" />
      <path d={heart} transform="translate(57 8) rotate(-5) scale(.85)" fill="#fac02f" />
      <path d={heart} transform="translate(8 21) rotate(15) scale(.85)" fill="#b38ce0" />
      <path d={heart} transform="translate(65 24) rotate(-15) scale(.7)" fill="#3d94e0" />
    </svg>
  );
}

function TaskButton({ children, state = '' }: { children: ReactNode; state?: string }) {
  return <div className={`w-12 h-10 flex items-center justify-center ${state}`}>{children}</div>;
}

function Taskbar() {
  return (
    <div className="absolute inset-x-0 bottom-0 h-10 flex text-white bg-[linear-gradient(to_bottom,#1b1b1b_0,#1b1b1b_50%,#00101f_60%,#000c19_100%)]">
      <div className="w-12 bg-[#02161f] flex items-center justify-center">
        <svg viewBox="0 0 16 16" className="size-4" fill="#fff"><path d="M0 2.300 6.500 1.400v6.100H0zM7.300 1.300 16 0v7.500H7.300zM0 8.400h6.500v6.200L0 13.700zM7.300 8.400H16V16l-8.700-1.200z" /></svg>
      </div>
      <div className="w-[288px] h-[40px] bg-[#f2f2f2] border border-[#c8c8c8] flex items-center text-[#333] overflow-hidden">
        <svg viewBox="0 0 17 17" className="ml-[11px] size-[17px]" fill="none" stroke="#222" strokeWidth="1.300"><circle cx="10.500" cy="6.500" r="5.500" /><path d="m6.500 10.500-6 6" /></svg>
        <span className="ml-[11px] text-[14px] tracking-[0px] whitespace-nowrap">Type here to search</span>
        <div className="ml-auto mr-[-1px]"><SearchArt /></div>
      </div>
      <TaskButton>
        <svg viewBox="0 0 16 16" className="size-4" fill="none" stroke="#fff" strokeWidth="1.200">
          <path d="M1.500 4.500h9v7h-9zM.500 0v2h11V0M.500 16v-2h11v2M14.500 0v2M14.500 7v9" /><path d="M13.500 3.500h2v2h-2z" fill="#fff" />
        </svg>
      </TaskButton>
      <div className="w-[3px]" />
      <TaskButton><EdgeIcon className="size-6" /></TaskButton>
      <div className="w-px" />
      <TaskButton>
        <svg viewBox="0 0 24 24" className="size-6">
          <path d="M1 3h8l2 2h12v15H1z" fill="#f2b632" />
          <path d="M1 7h22v13H1z" fill="#fcdc73" />
          <path d="M5 13h14v9h-4v-4H9v4H5z" fill="#3a90cf" />
          <path d="M5 13h14v2H5z" fill="#63aede" />
        </svg>
      </TaskButton>
      <div className="w-px" />
      <TaskButton><FirefoxIcon className="size-6" /></TaskButton>
      <div className="w-px" />
      <TaskButton>
        <div className="w-10 h-10 pb-px border-b-2 border-[#76b9ed] flex items-center justify-center">
          <svg viewBox="0 0 26 26" className="size-[26px]">
            <path d="M2 2h16l2 6v14l-14 2L4 12z" fill="#d6e3f5" />
            <path d="M2 2h15l1 5H4z" fill="#a8c1ea" />
            <path d="M10 2h5l-1 5-3-1z" fill="#4d7fd0" />
            <path d="M6 9h10v2H6z" fill="#5b8de0" />
            <path d="M8 14h4v8H8z" fill="#43a64c" />
            <circle cx="18" cy="18" r="6.500" fill="#d5cbf2" stroke="#9c8dd0" />
            <path d="M18 18l5-4 1 4zM18 18l-5 4-1-4z" fill="#eef" />
            <circle cx="18" cy="18" r="2" fill="#fff" stroke="#7265aa" />
          </svg>
        </div>
      </TaskButton>
      <div className="w-px" />
      <TaskButton state="bg-[#43494d] border-b-2 border-[#76b9ed]"><PaletteIcon className="size-6" /></TaskButton>
      <div className="flex-1" />
      <div className="w-[220px] flex items-center">
        <svg viewBox="0 0 12 8" className="ml-[13px] w-3 h-2" fill="none" stroke="#fff" strokeWidth="1.200"><path d="m1 7 5-5 5 5" /></svg>
        <svg viewBox="0 0 14 18" className="ml-[12px] w-[14px] h-[18px]" fill="none" stroke="#fff" strokeWidth="1.200">
          <path d="M1.500 5.500h7v7h-7zM8.500 8l3-2v6l-3-2M2 3q4-3 8 0M2 15q4 3 8 0" />
        </svg>
        <svg viewBox="0 0 17 16" className="ml-[8px] w-[17px] h-4" fill="none" stroke="#fff" strokeWidth="1.100">
          <path d="M5 2.500h11v8H5M.500 1.500h4v4h-4zM2.500 5.500v7H5M10 10.500v3M6 13.500h8" />
        </svg>
        <svg viewBox="0 0 18 16" className="ml-[6px] w-[18px] h-4" fill="none" stroke="#fff" strokeWidth="1.100">
          <path d="M1 5.500h2.500L7 2v12l-3.500-3.500H1zM9 6q2 2 0 4M11.500 4q4 4 0 8M14 2q6 6 0 12" />
        </svg>
        <div className="w-[70px] text-center text-[11.500px] leading-[18px] tracking-[-0.300px]">10:17 PM<br />8/30/2024</div>
        <svg viewBox="0 0 17 17" className="ml-[9px] size-[17px]" fill="none" stroke="#fff" strokeWidth="1.200"><path d="M1 1.500h15v11h-5l-3 3-2-3H1z" /></svg>
        <div className="ml-auto mr-[4px] w-px h-10 bg-[#4f5a68]" />
      </div>
    </div>
  );
}

export default function App() {
  return (
    <div className={`relative w-[1280px] h-[720px] overflow-hidden bg-[linear-gradient(to_right,#00adfc_0,#00adfc_134px,#0349c6_1144px,#0237b4_1280px)] ${UI}`}>
      <DesktopIcons />
      <BrowserWindow />
      <PaintWindow />
      <div className="absolute right-[5px] top-[629px] flex flex-col items-end text-white text-[11.500px] leading-[17px] whitespace-nowrap">
        <span>Test Mode</span>
        <span className="leading-4 tracking-[-0.150px]">Windows 10 Pro</span>
        <span className="leading-[18px] text-[11px] tracking-[-0.100px]">1.vb_release.191206-1406</span>
      </div>
      <Watermark />
      <Taskbar />
    </div>
  );
}
